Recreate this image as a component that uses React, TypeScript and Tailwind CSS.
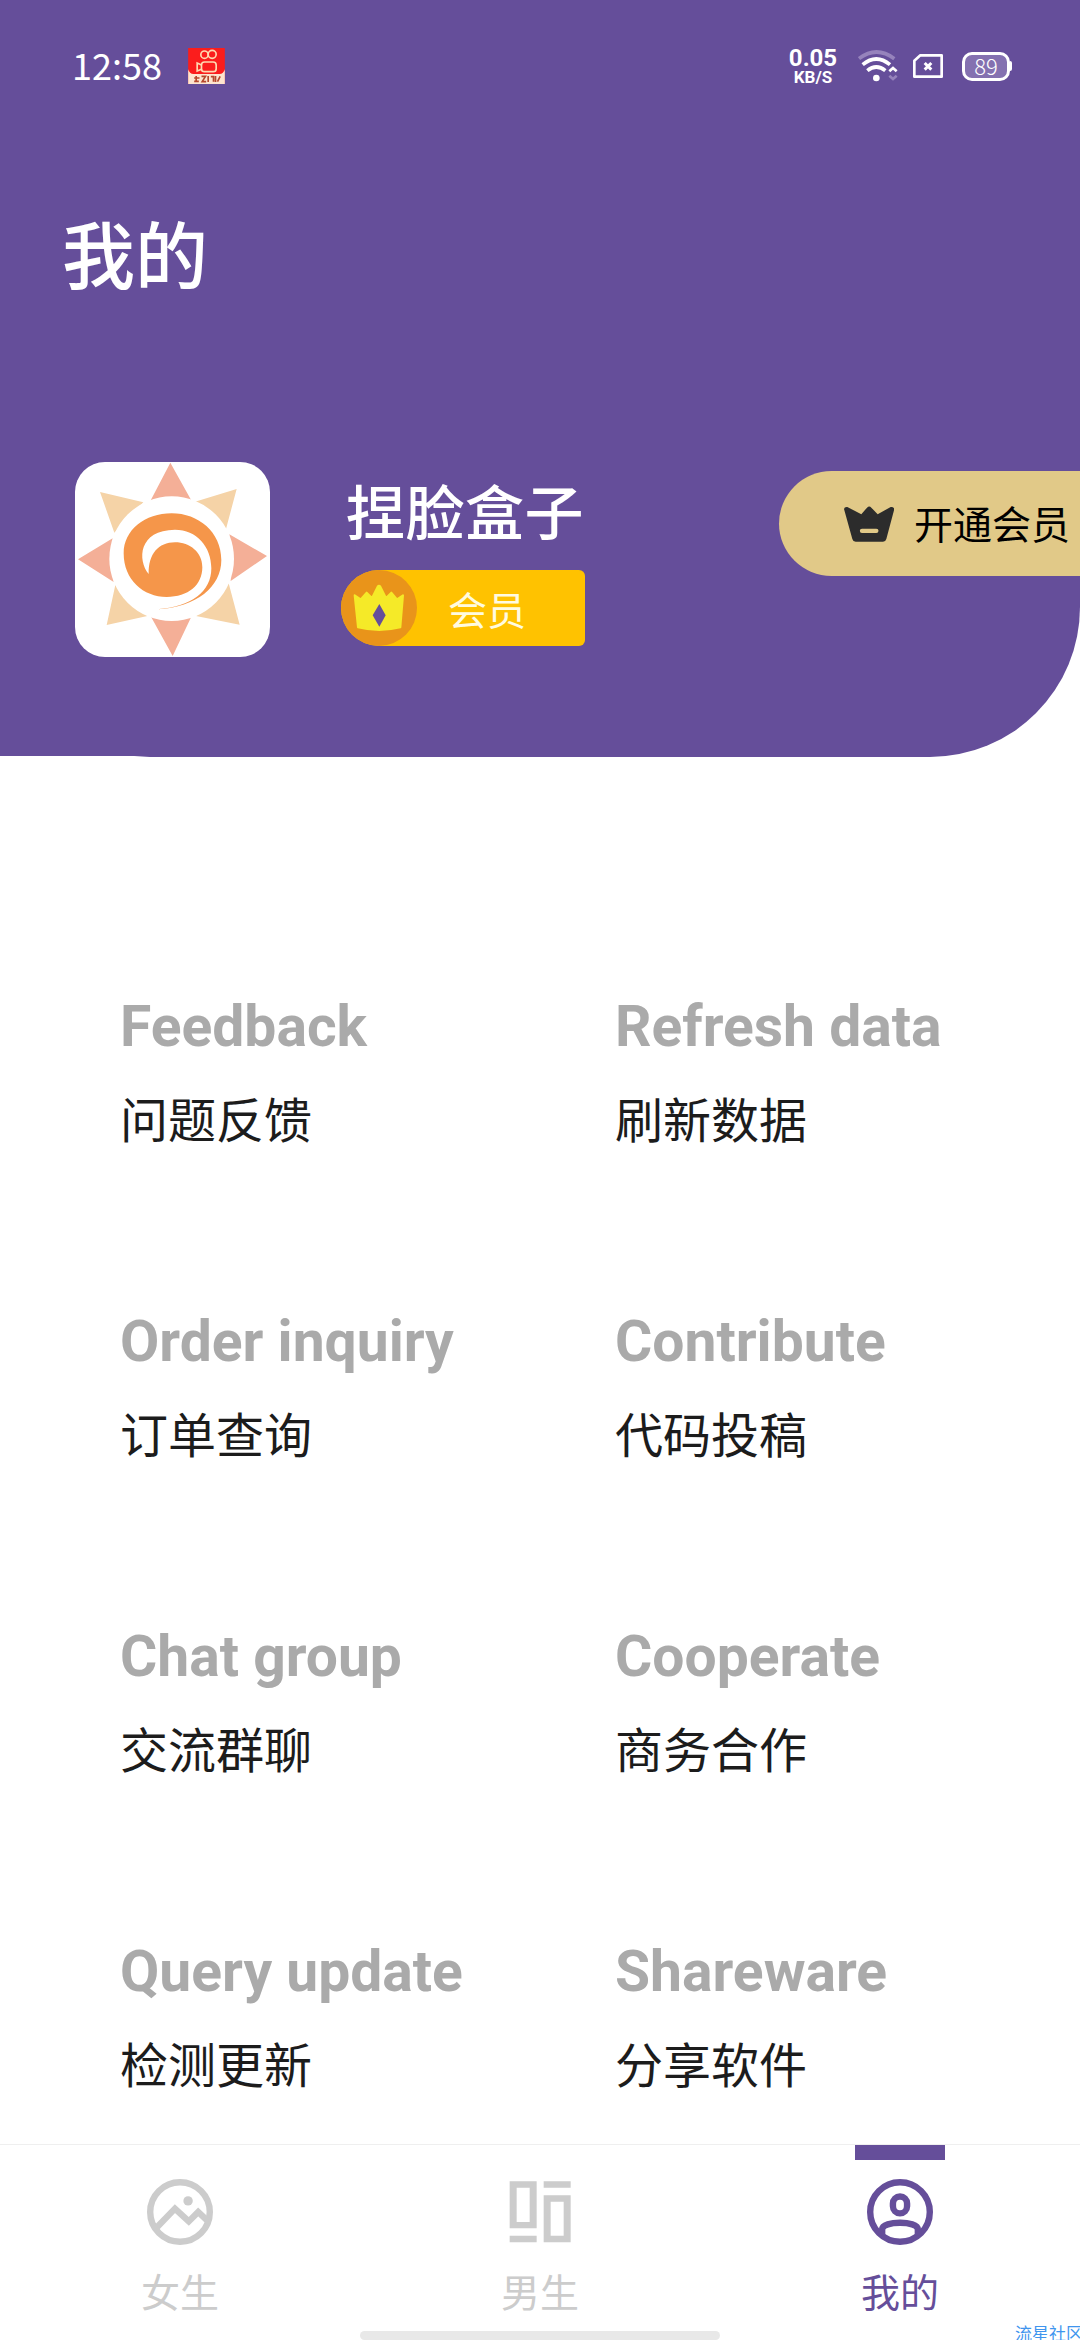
import type { ReactNode } from 'react';

interface MenuItem {
  en: string;
  zh: string;
}

interface Tab {
  label: string;
  icon: ReactNode;
  active?: boolean;
}

const menu: MenuItem[] = [
  { en: 'Feedback', zh: '问题反馈' },
  { en: 'Refresh data', zh: '刷新数据' },
  { en: 'Order inquiry', zh: '订单查询' },
  { en: 'Contribute', zh: '代码投稿' },
  { en: 'Chat group', zh: '交流群聊' },
  { en: 'Cooperate', zh: '商务合作' },
  { en: 'Query update', zh: '检测更新' },
  { en: 'Shareware', zh: '分享软件' },
];

const tabs: Tab[] = [
  { label: '女生', icon: <PhotoIcon /> },
  { label: '男生', icon: <BoardIcon /> },
  { label: '我的', icon: <UserIcon />, active: true },
];

function PhotoIcon() {
  return (
    <svg viewBox="0 0 196 196" className="h-[66px] w-[66px]" fill="none" stroke="currentColor" strokeWidth="19">
      <circle cx="98" cy="98" r="88.5" />
      <path d="M26 147 83 88l41 38 28-28 32 30" />
      <circle cx="122" cy="65" r="14" fill="currentColor" stroke="none" />
    </svg>
  );
}

function BoardIcon() {
  return (
    <svg viewBox="0 0 198 196" className="h-[66px] w-[66px]" fill="currentColor">
      <path fillRule="evenodd" d="M8 6h81v141H8zM29 25v103h39V25z" />
      <path d="M8 169h81v20H8zM110 6h81v19h-81z" />
      <path fillRule="evenodd" d="M110 48h81v141h-81zM131 67v102h39V67z" />
    </svg>
  );
}

function UserIcon() {
  return (
    <svg viewBox="0 0 196 196" className="h-[66px] w-[66px]" fill="none" stroke="currentColor" strokeWidth="19">
      <circle cx="98" cy="98" r="88.5" />
      <rect x="77" y="52" width="42" height="50" rx="21" />
      <path d="M45 168v-18c0-14 27-20 53-20s53 6 53 20v18" />
    </svg>
  );
}

function SunLogo() {
  return (
    <svg viewBox="45 36 585 585" className="h-full w-full">
      <path
        fill="#f4af97"
        d="M331 38 395 153H271zM621 318 508 253 512 393zM338 618 273 500H394zM54 328 158 265 161 396z"
      />
      <path
        fill="#f5d3a7"
        d="M530 117 405 155 498 237zM120 126 250 157 163 248zM140 525 166 405 262 498zM539 524 408 498 506 400z"
      />
      <circle cx="335" cy="326" r="187" fill="#fff" />
      <path
        fill="#f5964a"
        d="M292 478C410 472 484 410 484 330C484 246 415 190 335 190C255 190 191 240 191 310C191 390 250 441 320 441C385 441 427 405 427 352C427 307 390 277 345 277C295 277 265 312 266 372C232 330 235 240 345 239C410 239 454 290 454 355C454 425 395 470 292 478Z"
      />
    </svg>
  );
}

function StatusBar() {
  return (
    <div className="flex h-[132px] items-center justify-between pr-[68px] pl-[72px] text-white">
      <div className="flex items-center">
        <span className="mb-[5px] w-[116px] font-['Noto_Sans_CJK_SC',sans-serif] text-[36px] leading-[44px]">12:58</span>
        <svg viewBox="0 0 110 108" className="h-[36px] w-[37px]">
          <path fill="#fb1d1c" d="M0 0h110v108H0z" />
          <g fill="none" stroke="#ffd9b0" strokeWidth="5">
            <circle cx="49" cy="20" r="11" />
            <circle cx="72" cy="19" r="12" />
            <rect x="40" y="42" width="44" height="29" rx="9" />
            <path d="M40 51 27 45v24l13-5" />
          </g>
          <path fill="#fde5cf" d="M0 64q4 14 16 14h78q12 0 16-14v44H0z" />
          <path
            fill="none"
            stroke="#b5472c"
            strokeWidth="5"
            d="M18 90h16M24 84v18M18 100h14M40 85h12L42 101h12M60 84v18M68 86h8v15M82 84v18M88 101l8-16"
          />
        </svg>
      </div>
      <div className="flex items-center">
        <div className="mr-[19px] flex w-[52px] flex-col items-center font-[Roboto,sans-serif] font-bold">
          <span className="text-[24px] leading-[22px]">0.05</span>
          <span className="text-[17px] leading-[16px]">KB/S</span>
        </div>
        <svg viewBox="0 0 120 96" className="mr-[15px] h-[32px] w-[40px]" fill="none" stroke="#fff" strokeWidth="11">
          <path stroke="#9683bc" d="M3 26Q55-14 109 26" />
          <path d="M14 44Q55 10 96 44M28 62q27-22 54 0" />
          <circle cx="55" cy="84" r="10" fill="#fff" stroke="none" />
          <path strokeWidth="8" d="M94 64l11-10 11 10" />
          <path strokeWidth="8" stroke="#9683bc" d="M94 77l11 10 11-10" />
        </svg>
        <svg viewBox="0 0 90 72" className="mr-[19px] h-[24px] w-[30px]" fill="none" stroke="#fff" strokeWidth="8">
          <path strokeLinejoin="round" d="M22 4h64v64H4V20z" />
          <path strokeWidth="9" d="M35 27l20 20M55 27 35 47" />
        </svg>
        <div className="flex h-[29px] w-[48px] items-center justify-center rounded-[10px] border-[3px] border-white bg-[#8471b0] pb-[2px] font-['Noto_Sans_CJK_SC',sans-serif] text-[22px] leading-[22px] font-light">
          89
        </div>
        <div className="h-[10px] w-[2px] rounded-r bg-white" />
      </div>
    </div>
  );
}

function Profile() {
  return (
    <div className="flex h-[195px] pl-[75px]">
      <div className="h-[195px] w-[195px] shrink-0 overflow-hidden rounded-[30px] bg-white">
        <SunLogo />
      </div>

      <div className="ml-[71px] w-[244px] shrink-0">
        <div className="mt-[6px] pl-[5px] text-[59px] leading-[84px] font-medium tracking-[0.5px] whitespace-nowrap text-white">
          捏脸盒子
        </div>
        <div className="mt-[18px] flex h-[76px] items-center rounded-l-[38px] rounded-r-[6px] bg-[#ffc200]">
          <svg viewBox="0 0 228 228" className="h-[76px] w-[76px] shrink-0">
            <circle cx="114" cy="114" r="114" fill="#e9941a" />
            <path
              fill="#f5ea28"
              stroke="#f5ea28"
              strokeWidth="6"
              strokeLinejoin="round"
              d="M41 76 59 88 77 68 93 84 110 50Q114 44 118 50L135 84 151 68 168 88 186 76 178 172Q114 188 51 172Z"
            />
            <path fill="#654e9a" d="M115 102 134 136 115 170 95 136z" />
          </svg>
          <span className="ml-[31px] text-[39px] leading-[56px] text-[#fffbe0]">会员</span>
        </div>
      </div>

      <div className="mt-[9px] ml-auto flex h-[105px] w-[301px] items-center rounded-l-full bg-[#e1c988] pl-[65px]">
        <svg viewBox="0 0 150 108" className="h-[36px] w-[50px] shrink-0">
          <path
            fill="#2c2c2c"
            fillRule="evenodd"
            d="M0 9Q1 2 10 3L52 25 69 5Q76-2 82 5L101 25 140 3Q149 2 151 9L127 99Q125 107 117 107H35Q27 107 25 99ZM54 68a6 6 0 0 0 0 13H97a6 6 0 0 0 0-13Z"
          />
        </svg>
        <span className="mb-[3px] ml-[20px] text-[39px] leading-[56px] whitespace-nowrap text-black">开通会员</span>
      </div>
    </div>
  );
}

export default function App() {
  return (
    <div className="relative flex h-[2340px] w-[1080px] flex-col overflow-hidden bg-white font-['Noto_Sans_CJK_SC',sans-serif]">
      <header className="relative h-[757px] shrink-0 rounded-b-[150px] bg-[#654e9a]">
        <div className="absolute bottom-px left-0 h-[160px] w-[160px] bg-[#654e9a]" />
        <div className="relative">
          <StatusBar />
          <h1 className="mt-[67px] mb-[159px] pl-[62px] text-[73px] leading-[104px] font-medium text-white">我的</h1>
          <Profile />
        </div>
      </header>

      <main className="min-h-0 flex-1 overflow-hidden">
        <div className="grid grid-cols-[495px_465px] pt-[234px] pl-[120px]">
          {menu.map((item) => (
            <div key={item.en} className="h-[315px]">
              <div className="font-[Roboto,sans-serif] text-[57px] leading-[72px] font-bold text-[#aaaaaa]">{item.en}</div>
              <div className="mt-[18px] text-[48px] leading-[72px] text-[#1c1c1c]">{item.zh}</div>
            </div>
          ))}
        </div>
      </main>

      <nav className="grid h-[196px] shrink-0 grid-cols-3 border-t border-[#efefef] bg-white">
        {tabs.map((tab) => (
          <div
            key={tab.label}
            className={`flex flex-col items-center ${tab.active ? 'text-[#654e9a]' : 'text-[#cccccc]'}`}
          >
            <div className={`h-[15px] w-[90px] ${tab.active ? 'bg-[#654e9a]' : ''}`} />
            <div className="mt-[19px]">{tab.icon}</div>
            <span className="mt-[17px] text-[39px] leading-[56px]">{tab.label}</span>
          </div>
        ))}
      </nav>

      <div className="absolute bottom-0 left-[360px] h-[9px] w-[360px] rounded-full bg-[#e8e8e8]" />
      <div className="absolute top-[2323px] left-[1015px] text-[17px] leading-[20px] whitespace-nowrap text-[#3f95ee]">
        流星社区
      </div>
    </div>
  );
}
